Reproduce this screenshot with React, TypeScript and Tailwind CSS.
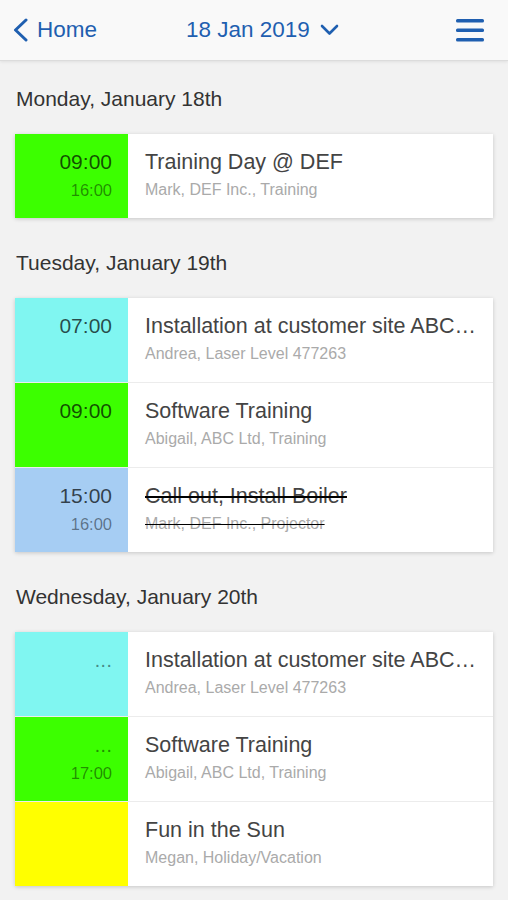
import React from 'react';

type Item = {
  color: string;
  start?: string;
  end?: string;
  title: string;
  sub: string;
  done?: boolean;
};

type Day = { label: string; items: Item[] };

const DAYS: Day[] = [
  {
    label: 'Monday, January 18th',
    items: [
      { color: 'bg-[#3cff00]', start: '09:00', end: '16:00', title: 'Training Day @ DEF', sub: 'Mark, DEF Inc., Training' },
    ],
  },
  {
    label: 'Tuesday, January 19th',
    items: [
      { color: 'bg-[#80f6f1]', start: '07:00', title: 'Installation at customer site ABC…', sub: 'Andrea, Laser Level 477263' },
      { color: 'bg-[#3cff00]', start: '09:00', title: 'Software Training', sub: 'Abigail, ABC Ltd, Training' },
      { color: 'bg-[#a6cdf3]', start: '15:00', end: '16:00', title: 'Call out, Install Boiler', sub: 'Mark, DEF Inc., Projector', done: true },
    ],
  },
  {
    label: 'Wednesday, January 20th',
    items: [
      { color: 'bg-[#80f6f1]', start: '...', title: 'Installation at customer site ABC…', sub: 'Andrea, Laser Level 477263' },
      { color: 'bg-[#3cff00]', start: '...', end: '17:00', title: 'Software Training', sub: 'Abigail, ABC Ltd, Training' },
      { color: 'bg-[#ffff00]', title: 'Fun in the Sun', sub: 'Megan, Holiday/Vacation' },
    ],
  },
];

function Row({ item }: { item: Item }) {
  const dots = item.start === '...';
  return (
    <div>
      <div className="flex h-[84px]">
        <div className={`${item.color} w-[113px] shrink-0 pr-4 pt-[15px] text-right`}>
          {item.start && (
            <div className={`text-[21px] leading-[26px] ${dots ? 'text-black/45' : 'text-black/70'}`}>{item.start}</div>
          )}
          {item.end && <div className="mt-[5px] text-[16.5px] leading-[20px] text-black/45">{item.end}</div>}
        </div>
        <div className={`min-w-0 flex-1 pl-[17px] pr-[6px] pt-[15px] ${item.done ? 'line-through' : ''}`}>
          <div className="whitespace-nowrap text-[21.5px] leading-[26px] text-[#444]">{item.title}</div>
          <div className="mt-[5px] whitespace-nowrap text-[16px] leading-[20px] text-[#aaa]">{item.sub}</div>
        </div>
      </div>
    </div>
  );
}

export default function App() {
  return (
    <div className="min-h-[900px] bg-[#f2f2f2] [font-family:'Liberation_Sans',Arial,sans-serif]">
      <header className="flex h-[61px] items-center border-b border-[#dcdcdc] bg-[#f9f9f9] pl-[12px] pr-[23px] text-[#1f5fb0] shadow-[0_1px_3px_rgba(0,0,0,0.08)]">
        <div className="flex w-[174px] items-center gap-[8px]">
          <svg width="17" height="24" viewBox="0 0 17 24" fill="none">
            <path d="M14 2 L3.5 12 L14 22" stroke="#1f5fb0" strokeWidth="3" strokeLinecap="round" strokeLinejoin="round" />
          </svg>
          <span className="text-[22.5px]">Home</span>
        </div>
        <div className="flex items-center gap-[10px]">
          <span className="text-[22.5px]">18 Jan 2019</span>
          <svg width="19" height="12" viewBox="0 0 19 12" fill="none">
            <path d="M2 2 L9.5 9.5 L17 2" stroke="#1f5fb0" strokeWidth="2.6" strokeLinecap="round" strokeLinejoin="round" />
          </svg>
        </div>
        <svg width="30" height="24" viewBox="0 0 30 24" className="ml-auto">
          <rect x="1" y="1" width="28" height="3.4" rx="1.5" fill="#1f5fb0" />
          <rect x="1" y="10.5" width="28" height="3.4" rx="1.5" fill="#1f5fb0" />
          <rect x="1" y="20" width="28" height="3.4" rx="1.5" fill="#1f5fb0" />
        </svg>
      </header>

      <main className="px-[15px]">
        {DAYS.map((day) => (
          <section key={day.label} className="mb-[7px]">
            <h2 className="pb-[23px] pl-px pt-[26px] text-[21px] leading-[24px] text-[#333]">{day.label}</h2>
            <div className="divide-y divide-[#ececec] overflow-hidden bg-white shadow-[0_1px_4px_rgba(0,0,0,0.18)]">
              {day.items.map((item, i) => (
                <Row key={i} item={item} />
              ))}
            </div>
          </section>
        ))}
      </main>
    </div>
  );
}
